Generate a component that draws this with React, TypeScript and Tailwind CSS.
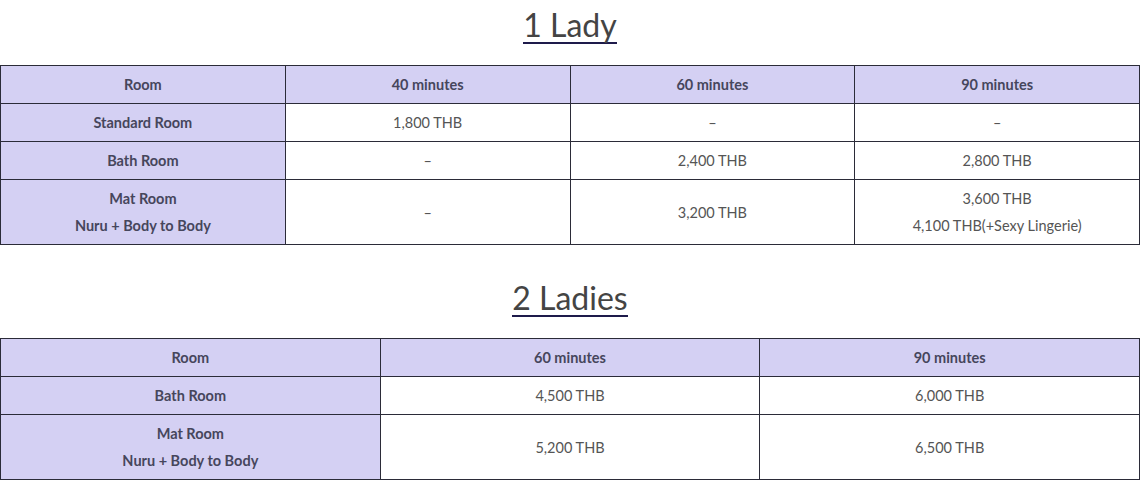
import React from "react";

const body = { fontFamily: "Lato, 'Open Sans', sans-serif" };

function Title({ children }: { children: React.ReactNode }) {
  return (
    <div className="flex justify-center h-[65px]">
      <span
        className="mt-[6px] h-[38px] text-[32px] leading-[38px] text-[#444444] border-b-2 border-[#1e1b4b]"
        style={{ fontFamily: "Lato, sans-serif" }}
      >
        {children}
      </span>
    </div>
  );
}

const th = "border border-[#2b2b38] bg-[#d4d0f3] text-[#46465c] font-bold text-[14.5px] leading-[27px] py-[5px] text-center";
const td = "border border-[#2b2b38] bg-white text-[#555555] text-[14.5px] leading-[27px] py-[5px] text-center";

export default function App() {
  return (
    <div className="w-[1140px] bg-white" style={body}>
      <Title>1 Lady</Title>
      <table className="w-[1140px] border-collapse table-fixed">
        <tbody>
          <tr>
            <td className={th}>Room</td>
            <td className={th}>40 minutes</td>
            <td className={th}>60 minutes</td>
            <td className={th}>90 minutes</td>
          </tr>
          <tr>
            <td className={th}>Standard Room</td>
            <td className={td}>1,800 THB</td>
            <td className={td}>–</td>
            <td className={td}>–</td>
          </tr>
          <tr>
            <td className={th}>Bath Room</td>
            <td className={td}>–</td>
            <td className={td}>2,400 THB</td>
            <td className={td}>2,800 THB</td>
          </tr>
          <tr>
            <td className={th}>
              Mat Room
              <br />
              Nuru + Body to Body
            </td>
            <td className={td}>–</td>
            <td className={td}>3,200 THB</td>
            <td className={td}>
              3,600 THB
              <br />
              4,100 THB(+Sexy Lingerie)
            </td>
          </tr>
        </tbody>
      </table>
      <div className="h-[28px]" />
      <Title>2 Ladies</Title>
      <table className="w-[1140px] border-collapse table-fixed">
        <tbody>
          <tr>
            <td className={th}>Room</td>
            <td className={th}>60 minutes</td>
            <td className={th}>90 minutes</td>
          </tr>
          <tr>
            <td className={th}>Bath Room</td>
            <td className={td}>4,500 THB</td>
            <td className={td}>6,000 THB</td>
          </tr>
          <tr>
            <td className={th}>
              Mat Room
              <br />
              Nuru + Body to Body
            </td>
            <td className={td}>5,200 THB</td>
            <td className={td}>6,500 THB</td>
          </tr>
        </tbody>
      </table>
    </div>
  );
}
